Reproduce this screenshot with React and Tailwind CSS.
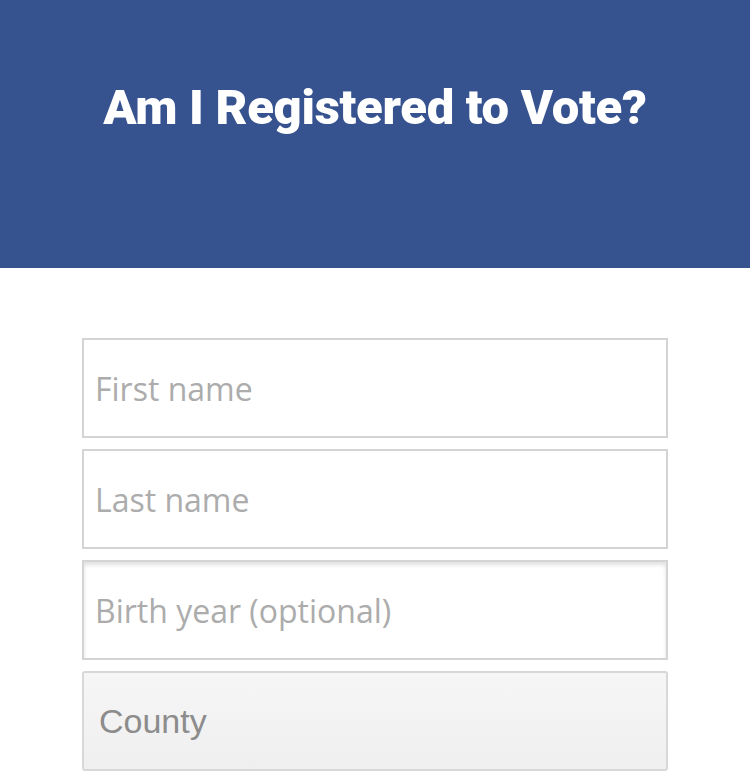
const field =
  "h-[100px] w-full border-2 border-[#d4d4d4] pl-[11px] text-[32px] font-['Open_Sans',sans-serif] font-normal text-[#999] placeholder-[#acacac] outline-none";

export default function App() {
  return (
    <div className="min-h-screen bg-white">
      <header className="h-[268px] bg-[#36528f] flex justify-center pt-[78px]">
        <h1 className="text-white text-[49px] leading-[60px] font-black tracking-[-0.3px] font-['Roboto',sans-serif]">
          Am I Registered to Vote?
        </h1>
      </header>

      <form className="flex flex-col gap-[11px] px-[82px] pt-[70px]">
        <input className={field} placeholder="First name" />
        <input className={field} placeholder="Last name" />
        <input className={field + " shadow-[inset_0_3px_4px_rgba(0,0,0,0.12)]"} placeholder="Birth year (optional)" />
        <div className="h-[100px] w-full border-2 border-[#d8d8d8] rounded-[3px] bg-gradient-to-b from-[#f6f6f6] to-[#efefef] pl-[15px] flex items-center text-[34px] text-[#8c8c8c] font-['Liberation_Sans',Arial,sans-serif]">
          County
        </div>
      </form>
    </div>
  );
}
